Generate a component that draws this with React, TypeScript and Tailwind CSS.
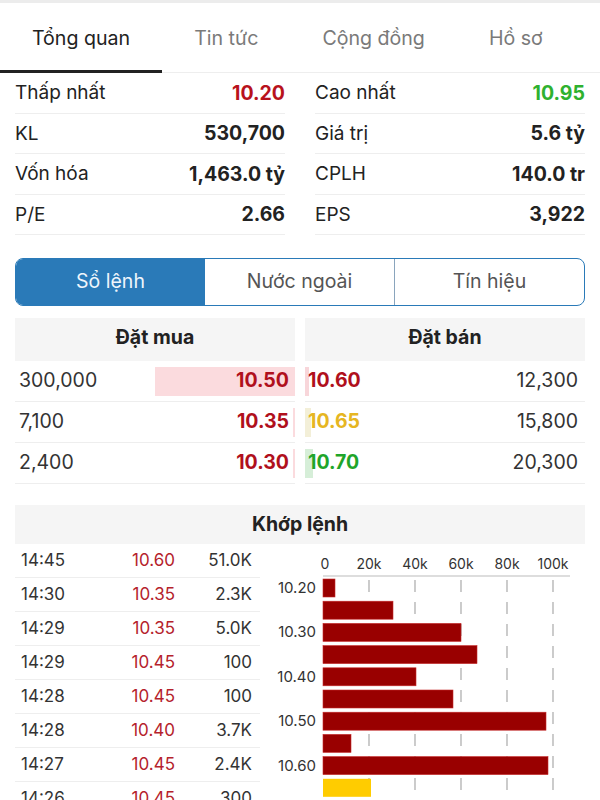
import React from "react";

const tabs = ["Tổng quan", "Tin tức", "Cộng đồng", "Hồ sơ"];

const stats: [string, string, string, string, string, string][] = [
  ["Thấp nhất", "10.20", "text-[#b8121c]", "Cao nhất", "10.95", "text-[#2fb12f]"],
  ["KL", "530,700", "text-[#222]", "Giá trị", "5.6 tỷ", "text-[#222]"],
  ["Vốn hóa", "1,463.0 tỷ", "text-[#222]", "CPLH", "140.0 tr", "text-[#222]"],
  ["P/E", "2.66", "text-[#222]", "EPS", "3,922", "text-[#222]"],
];

const buys = [
  { vol: "300,000", price: "10.50", bar: 140 },
  { vol: "7,100", price: "10.35", bar: 2 },
  { vol: "2,400", price: "10.30", bar: 2 },
];

const sells = [
  { vol: "12,300", price: "10.60", bar: 4, color: "text-[#b0101c]", barColor: "bg-[#f8d6da]" },
  { vol: "15,800", price: "10.65", bar: 6, color: "text-[#e6b622]", barColor: "bg-[#f3efd8]" },
  { vol: "20,300", price: "10.70", bar: 8, color: "text-[#1fa52a]", barColor: "bg-[#d6eed8]" },
];

const trades = [
  ["14:45", "10.60", "51.0K"],
  ["14:30", "10.35", "2.3K"],
  ["14:29", "10.35", "5.0K"],
  ["14:29", "10.45", "100"],
  ["14:28", "10.45", "100"],
  ["14:28", "10.40", "3.7K"],
  ["14:27", "10.45", "2.4K"],
  ["14:26", "10.45", "300"],
];

function Chart() {
  // svg origin at page x=260, y=543
  const ox = 260;
  const oy = 543;
  const x0 = 323 - ox;
  const step = 46;
  const bars = [
    { w: 12, c: "#990000" },
    { w: 70, c: "#990000" },
    { w: 138, c: "#990000" },
    { w: 154, c: "#990000" },
    { w: 93, c: "#990000" },
    { w: 130, c: "#990000" },
    { w: 223, c: "#990000" },
    { w: 28, c: "#990000" },
    { w: 225, c: "#990000" },
    { w: 48, c: "#ffcc00" },
    { w: 64, c: "#c6ecdc" },
  ];
  const labels = ["0", "20k", "40k", "60k", "80k", "100k"];
  const yLabels: [string, number][] = [
    ["10.20", 0],
    ["10.30", 2],
    ["10.40", 4],
    ["10.50", 6],
    ["10.60", 8],
  ];
  const barTop = (i: number) => 578 - oy + i * 22.2;
  return (
    <svg width={330} height={257} className="block shrink-0">
      {labels.map((l, i) => (
        <text
          key={l}
          x={x0 + i * step + (i === 0 ? 2 : 0)}
          y={25}
          textAnchor="middle"
          fontSize={14}
          fill="#333"
          fontFamily="Inter, sans-serif"
        >
          {l}
        </text>
      ))}
      <line x1={x0} x2={570 - ox} y1={575 - oy} y2={575 - oy} stroke="#bbb" strokeWidth={1} />
      {labels.slice(1).map((l, i) => (
        <line
          key={l}
          x1={x0 + (i + 1) * step}
          x2={x0 + (i + 1) * step}
          y1={579 - oy}
          y2={257}
          stroke="#aaa"
          strokeWidth={1.2}
          strokeDasharray="12 10"
        />
      ))}
      {bars.map((b, i) => (
        <rect
          key={i}
          x={x0}
          y={barTop(i)}
          width={b.w}
          height={18}
          fill={b.c}
          stroke={b.c === "#990000" ? "#c62a2a" : "none"}
          strokeWidth={0.6}
        />
      ))}
      {yLabels.map(([l, i]) => (
        <text
          key={l}
          x={316 - ox}
          y={barTop(i) + 14}
          textAnchor="end"
          fontSize={15}
          fill="#333"
          fontFamily="Inter, sans-serif"
        >
          {l}
        </text>
      ))}
    </svg>
  );
}

export default function App() {
  return (
    <div className="w-[600px] h-[800px] overflow-hidden bg-white font-['Inter',sans-serif] text-[#222]">
      <div className="h-[3px] bg-[#ececec]" />
      <div className="flex h-[70px] border-b border-[#eeeeee]">
        {tabs.map((t, i) => (
          <div
            key={t}
            className={
              i === 0
                ? "px-[32px] flex items-center text-[19.6px] text-[#222] border-b-[3px] border-[#222] -mb-px pt-[5px]"
                : "px-[32px] flex items-center text-[19.6px] text-[#7a7a7a] pt-[2px]"
            }
          >
            {t}
          </div>
        ))}
      </div>

      <div className="px-[15px] grid grid-cols-2 gap-x-[30px]">
        {[0, 1].map((col) => (
          <div key={col} className="flex flex-col">
            {stats.map((s) => (
              <div
                key={s[col * 3]}
                className="h-[40.5px] border-b border-[#eeeeee] flex items-center justify-between pt-[1px]"
              >
                <span className="text-[19px]">{s[col * 3]}</span>
                <span className={"text-[19.5px] font-bold " + s[col * 3 + 2]}>{s[col * 3 + 1]}</span>
              </div>
            ))}
          </div>
        ))}
      </div>

      <div className="mx-[15px] mt-[23px] h-[48px] rounded-[8px] border-[1.5px] border-[#2a7ab8] flex overflow-hidden text-[19.5px]">
        <div className="flex-1 bg-[#2a7ab8] text-[#eef5fc] flex items-center justify-center">Sổ lệnh</div>
        <div className="flex-1 text-[#555] flex items-center justify-center">Nước ngoài</div>
        <div className="flex-1 text-[#555] flex items-center justify-center border-l border-[#8aa5bd]">Tín hiệu</div>
      </div>

      <div className="mx-[15px] mt-[12px] grid grid-cols-2 gap-x-[10px]">
        <div className="flex flex-col">
          <div className="h-[43px] bg-[#f5f5f5] flex items-center justify-center text-[19.5px] font-bold pb-[3px]">Đặt mua</div>
          {buys.map((b) => (
            <div key={b.vol} className="relative h-[41px] border-b border-[#eeeeee] flex items-center justify-between pl-[4px] pr-[6px]">
              <div className="absolute right-0 top-[6px] bottom-[5px] bg-[#fbdbde]" style={{ width: b.bar }} />
              <span className="relative text-[19.5px] text-[#333]">{b.vol}</span>
              <span className="relative text-[19.5px] font-bold text-[#b0101c]">{b.price}</span>
            </div>
          ))}
        </div>
        <div className="flex flex-col">
          <div className="h-[43px] bg-[#f5f5f5] flex items-center justify-center text-[19.5px] font-bold pb-[3px]">Đặt bán</div>
          {sells.map((s) => (
            <div key={s.vol} className="relative h-[41px] border-b border-[#eeeeee] flex items-center justify-between pl-[3px] pr-[7px]">
              <div className={"absolute left-0 top-[6px] bottom-[5px] " + s.barColor} style={{ width: s.bar }} />
              <span className={"relative text-[19.5px] font-bold " + s.color}>{s.price}</span>
              <span className="relative text-[19.5px] text-[#333]">{s.vol}</span>
            </div>
          ))}
        </div>
      </div>

      <div className="mx-[15px] mt-[21px] h-[39px] bg-[#f5f5f5] flex items-center justify-center text-[19.5px] font-bold">
        Khớp lệnh
      </div>

      <div className="flex">
        <div className="ml-[15px] w-[245px] shrink-0 flex flex-col">
          {trades.map((t, i) => (
            <div key={i} className="h-[34px] border-b border-[#eeeeee] flex items-center pl-[6px] pr-[8px] text-[17px]">
              <span className="flex-1 text-[#333]">{t[0]}</span>
              <span className="w-[70px] text-right text-[#b5222c]">{t[1]}</span>
              <span className="w-[77px] text-right text-[#333]">{t[2]}</span>
            </div>
          ))}
        </div>
        <Chart />
      </div>
    </div>
  );
}
